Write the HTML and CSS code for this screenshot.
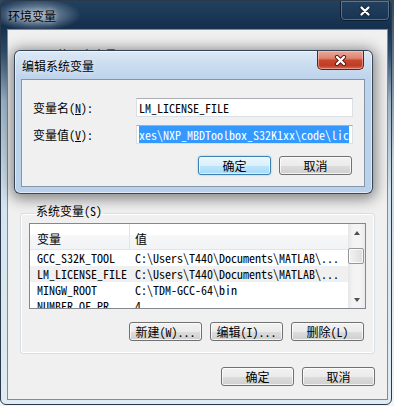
FILE: index.html
```html
<!DOCTYPE html>
<html lang="zh-CN">
<head>
  <meta charset="UTF-8" />
  <title>环境变量</title>
  <link rel="stylesheet" href="styles.css">
</head>
<body>
  <div class="window outer">
    <div class="titlebar">
      <span class="title">环境变量</span>
      <span class="close">
        <svg width="12" height="10" viewBox="0 0 12 10">
          <path d="M2.5 1.5 L9.5 8.5 M9.5 1.5 L2.5 8.5" stroke="#1a2633" stroke-width="4" stroke-linecap="round" />
          <path d="M2.5 1.5 L9.5 8.5 M9.5 1.5 L2.5 8.5" stroke="#fff" stroke-width="2.2" stroke-linecap="round" />
        </svg>
      </span>
    </div>

    <div class="client">
      <div class="user-group">
        <span class="group-label">T440 的用户变量(U)</span>
      </div>

      <fieldset class="group">
        <legend>系统变量(S)</legend>
        <div class="list">
          <div class="table">
            <div class="list-head">
              <span>变量</span>
              <span>值</span>
            </div>
            <div class="row"><span>GCC_S32K_TOOL</span><span>C:\Users\T440\Documents\MATLAB\...</span></div>
            <div class="row selected"><span>LM_LICENSE_FILE</span><span>C:\Users\T440\Documents\MATLAB\...</span></div>
            <div class="row"><span>MINGW_ROOT</span><span>C:\TDM-GCC-64\bin</span></div>
            <div class="row"><span>NUMBER_OF_PR...</span><span>4</span></div>
          </div>
          <div class="scrollbar">
            <div class="arrow"><span class="tri up"></span></div>
            <div class="track"><div class="thumb"></div></div>
            <div class="arrow"><span class="tri down"></span></div>
          </div>
        </div>
        <div class="buttons group-buttons">
          <button class="btn">新建(W)...</button>
          <button class="btn">编辑(I)...</button>
          <button class="btn">删除(L)</button>
        </div>
      </fieldset>

      <div class="buttons dialog-buttons">
        <button class="btn">确定</button>
        <button class="btn">取消</button>
      </div>
    </div>
  </div>

  <!-- edit dialog sits on top of the environment window -->
  <div class="window dialog">
    <div class="titlebar">
      <span class="title">编辑系统变量</span>
      <span class="close red">
        <svg width="13" height="11" viewBox="0 0 13 11">
          <path d="M3 2 L10 9 M10 2 L3 9" stroke="#4a1a12" stroke-width="4.2" stroke-linecap="round" />
          <path d="M3 2 L10 9 M10 2 L3 9" stroke="#fff" stroke-width="2.4" stroke-linecap="round" />
        </svg>
      </span>
    </div>
    <div class="client">
      <div class="fields">
        <label>变量名(<u>N</u>):</label>
        <div class="field">LM_LICENSE_FILE</div>
        <label>变量值(<u>V</u>):</label>
        <div class="field"><span class="sel">xes\NXP_MBDToolbox_S32K1xx\code\lic</span></div>
      </div>
      <div class="buttons edit-buttons">
        <button class="btn default">确定</button>
        <button class="btn">取消</button>
      </div>
    </div>
  </div>
</body>
</html>
```

FILE: styles.css
```css
:root {
  --face: #f0f0f0;
  --ui-font: "Noto Sans Mono CJK SC", "Noto Sans CJK SC", sans-serif;
}

* {
  box-sizing: border-box;
}

body {
  margin: 0;
  width: 394px;
  height: 406px;
  overflow: hidden;
  position: relative;
  background: linear-gradient(#34465a, #c8d4de 40%, #f2f5f7);
  font-family: var(--ui-font);
  font-size: 12px;
  color: #000;
}

u {
  text-decoration: underline;
  text-underline-offset: 1px;
}

/* window frames */
.window {
  display: flex;
  flex-direction: column;
  border-radius: 6px;
}

.outer {
  width: 392px;
  height: 405px;
  border: 1px solid #2b3a4a;
  background:
    radial-gradient(ellipse 44px 16px at 36px 14px, rgba(205, 218, 230, 0.75), rgba(205, 218, 230, 0)),
    linear-gradient(to bottom, #22405f 0, #15304e 26px, #2c4b6a 50px, #9db4c7 100px, #d3e3ef 190px, #e0ebf3 100%);
}

.titlebar {
  display: flex;
  align-items: center;
  height: 28px;
  flex: none;
}

.title {
  flex: 1;
  padding-left: 7px;
  font-family: "Noto Sans CJK SC", sans-serif;
  text-shadow: 0 0 5px rgba(255, 255, 255, 0.8);
}

.close {
  align-self: flex-start;
  display: flex;
  align-items: center;
  justify-content: center;
  width: 50px;
  height: 20px;
  margin-right: 1px;
  border: 1px solid rgba(10, 20, 30, 0.7);
  border-top: none;
  border-radius: 0 0 5px 5px;
  box-shadow: inset 0 0 0 1px rgba(255, 255, 255, 0.28);
}

.close.red {
  width: 47px;
  height: 19px;
  margin-right: 8px;
  border-color: #5a2419;
  background: linear-gradient(#eaa99a 0, #df8470 40%, #c9472f 52%, #c13b25 80%, #d86a4f 100%);
  box-shadow: inset 0 0 0 1px rgba(255, 220, 210, 0.45);
}

.client {
  flex: 1;
  background: var(--face);
}

.outer .client {
  margin: 0 3px 4px 6px;
  border: 1px solid #7d8d9c;
  padding: 0 12px;
}

/* group boxes */
.user-group {
  height: 175px;
  padding: 16px 0 0 7px;
}

.group-label,
legend {
  line-height: 12px;
}

.group {
  margin: 0;
  padding: 2px 8px 12px;
  min-width: 0;
  border: 1px solid #d5dfe5;
  border-radius: 3px;
  box-shadow: inset 0 0 0 1px #fff;
}

legend {
  margin-left: 6px;
  padding: 0 1px 4px;
}

/* list view */
.list {
  display: flex;
  height: 86px;
  border: 1px solid #828790;
  background: #fff;
}

.table {
  flex: 1;
  min-width: 0;
  overflow: hidden;
}

.list-head,
.row {
  display: grid;
  grid-template-columns: 100px 1fr;
  white-space: nowrap;
}

.list-head {
  height: 26px;
  padding-top: 8px;
  line-height: 14px;
  border-bottom: 1px solid #e5e5e5;
  background: linear-gradient(#fff 0, #fff 44%, #f6f7f8 45%, #f2f3f5 100%);
  font-family: "Noto Sans CJK SC", sans-serif;
}

.list-head span:first-child {
  border-right: 1px solid #e3e5e8;
  margin-top: -8px;
  padding-top: 8px;
}

.list-head span:first-child,
.row span:first-child {
  padding-left: 7px;
}

.list-head span:last-child,
.row span:last-child {
  padding-left: 5px;
}

.row {
  height: 16px;
  line-height: 16px;
}

.row.selected {
  background: #f0f0f0;
}

.scrollbar {
  width: 17px;
  display: flex;
  flex-direction: column;
  background: linear-gradient(to right, #e6e6e6, #f4f4f4 30%, #f4f4f4 70%, #e9e9e9);
}

.arrow {
  height: 17px;
  display: flex;
  align-items: center;
  justify-content: center;
}

.tri {
  width: 0;
  height: 0;
  border-left: 3.5px solid transparent;
  border-right: 3.5px solid transparent;
}

.tri.up {
  border-bottom: 4px solid #505050;
}

.tri.down {
  border-top: 4px solid #505050;
}

.track {
  flex: 1;
}

.thumb {
  margin: 7px 1px 0 0;
  height: 16px;
  border: 1px solid #979797;
  border-radius: 2px;
  background: linear-gradient(to right, #f3f3f3, #e8e8e8 50%, #dcdcdc);
  box-shadow: inset 0 0 0 1px rgba(255, 255, 255, 0.8);
}

/* buttons */
.buttons {
  display: flex;
  justify-content: flex-end;
  gap: 8px;
}

.group-buttons {
  margin-top: 13px;
  padding-right: 2px;
}

.dialog-buttons {
  margin-top: 13px;
}

.btn {
  width: 73px;
  height: 19px;
  padding: 0;
  border: 1px solid #707070;
  border-radius: 3px;
  background: linear-gradient(#f2f2f2 0, #ebebeb 50%, #dddddd 51%, #cfcfcf 100%);
  box-shadow: inset 0 0 0 1px rgba(255, 255, 255, 0.75);
  font-family: var(--ui-font);
  font-size: 12px;
  line-height: 17px;
  color: #000;
}

.btn.default {
  border-color: #3c7fb1;
  background: linear-gradient(#eaf6fd 0, #d9f0fc 50%, #bee6fd 51%, #a7d9f5 100%);
  box-shadow: inset 0 0 0 1px rgba(255, 255, 255, 0.6), 0 0 2px #6cc4f0;
}

/* edit dialog */
.dialog {
  position: absolute;
  left: 14px;
  top: 50px;
  width: 359px;
  height: 144px;
  border: 1px solid rgba(20, 32, 46, 0.8);
  background: linear-gradient(to bottom, #dde9f6 0, #cadcf0 14px, #bed4ec 28px, #b9d1ea 100%);
  box-shadow: 0 2px 14px 3px rgba(0, 0, 0, 0.45), inset 0 0 0 1px rgba(255, 255, 255, 0.55);
}

.dialog .client {
  margin: 0 7px 6px 6px;
  border: 1px solid #8596a8;
  padding: 18px 11px 0;
}

.fields {
  display: grid;
  grid-template-columns: 103px 217px;
  row-gap: 8px;
  align-items: center;
}

.field {
  height: 19px;
  padding: 1px 2px;
  line-height: 15px;
  border: 1px solid #dbdfe6;
  border-top-color: #abadb3;
  background: #fff;
  white-space: nowrap;
  overflow: hidden;
}

.sel {
  background: #3399ff;
  color: #fff;
}

.edit-buttons {
  margin-top: 12px;
  margin-right: 1px;
}
```
